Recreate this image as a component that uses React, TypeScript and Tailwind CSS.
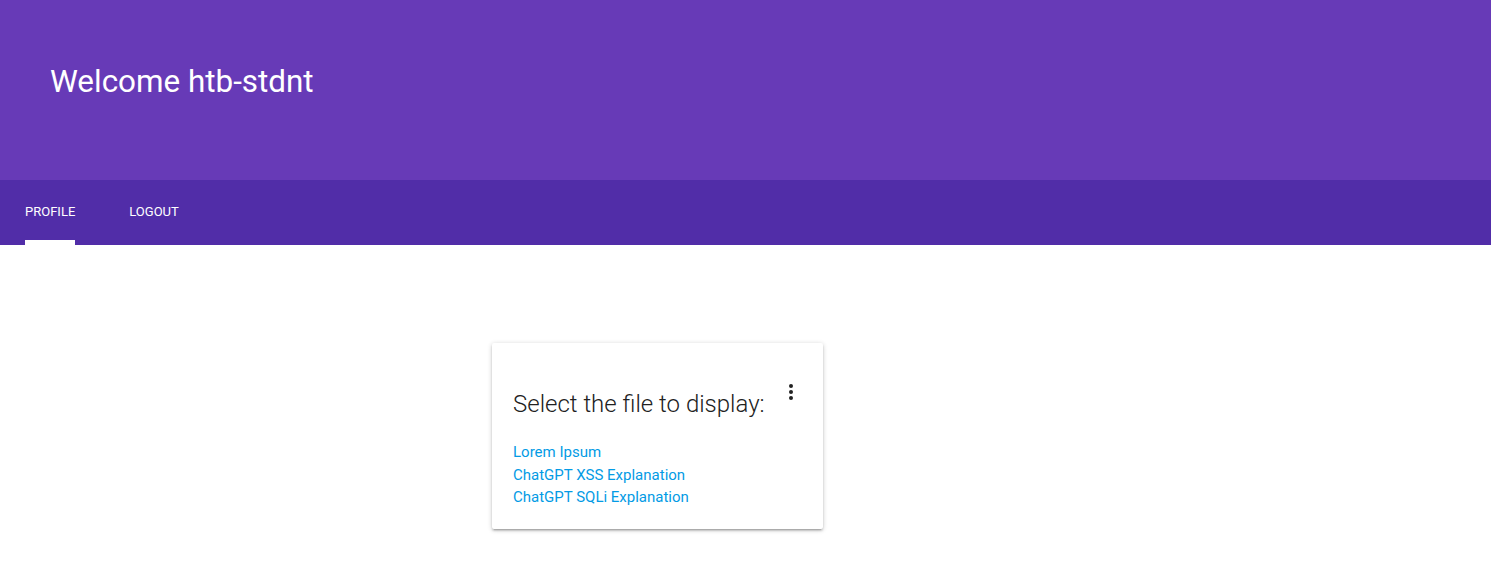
import React from "react";

export default function App() {
  return (
    <div className="min-h-[569px] bg-white" style={{ fontFamily: "Roboto, 'Noto Sans', sans-serif" }}>
      <header className="h-[180px] bg-[#673ab7] flex items-center pl-[50px] pb-[17px]">
        <h1 className="text-white text-[31.4px] font-normal leading-none">Welcome htb-stdnt</h1>
      </header>
      <nav className="h-[65px] bg-[#512da8] flex items-end pl-[25px]">
        <div className="flex gap-[54px]">
          <div className="flex flex-col items-stretch">
            <span className="text-white text-[13px] uppercase leading-none pb-[22px]">Profile</span>
            <div className="h-[5px] bg-white"></div>
          </div>
          <div className="flex flex-col">
            <span className="text-white text-[13px] uppercase leading-none pb-[27px]">Logout</span>
          </div>
        </div>
      </nav>
      <main className="pt-[98px] pl-[492px]">
        <div className="w-[331px] h-[186px] bg-white rounded-[2px] shadow-[0_2px_2px_0_rgba(0,0,0,0.14),0_3px_1px_-2px_rgba(0,0,0,0.12),0_1px_5px_0_rgba(0,0,0,0.2)] relative px-[21px] pt-[47px]">
          <div className="absolute right-[30px] top-[41px] flex flex-col gap-[2px]">
            <span className="block w-[4px] h-[4px] rounded-full bg-[#222]"></span>
            <span className="block w-[4px] h-[4px] rounded-full bg-[#222]"></span>
            <span className="block w-[4px] h-[4px] rounded-full bg-[#222]"></span>
          </div>
          <h2 className="text-[24px] font-light text-[#212121] leading-[28px]">Select the file to display:</h2>
          <div className="mt-[23px] flex flex-col text-[15px] leading-[22.5px] text-[#039be5]">
            <a href="#">Lorem Ipsum</a>
            <a href="#">ChatGPT XSS Explanation</a>
            <a href="#">ChatGPT SQLi Explanation</a>
          </div>
        </div>
      </main>
    </div>
  );
}
